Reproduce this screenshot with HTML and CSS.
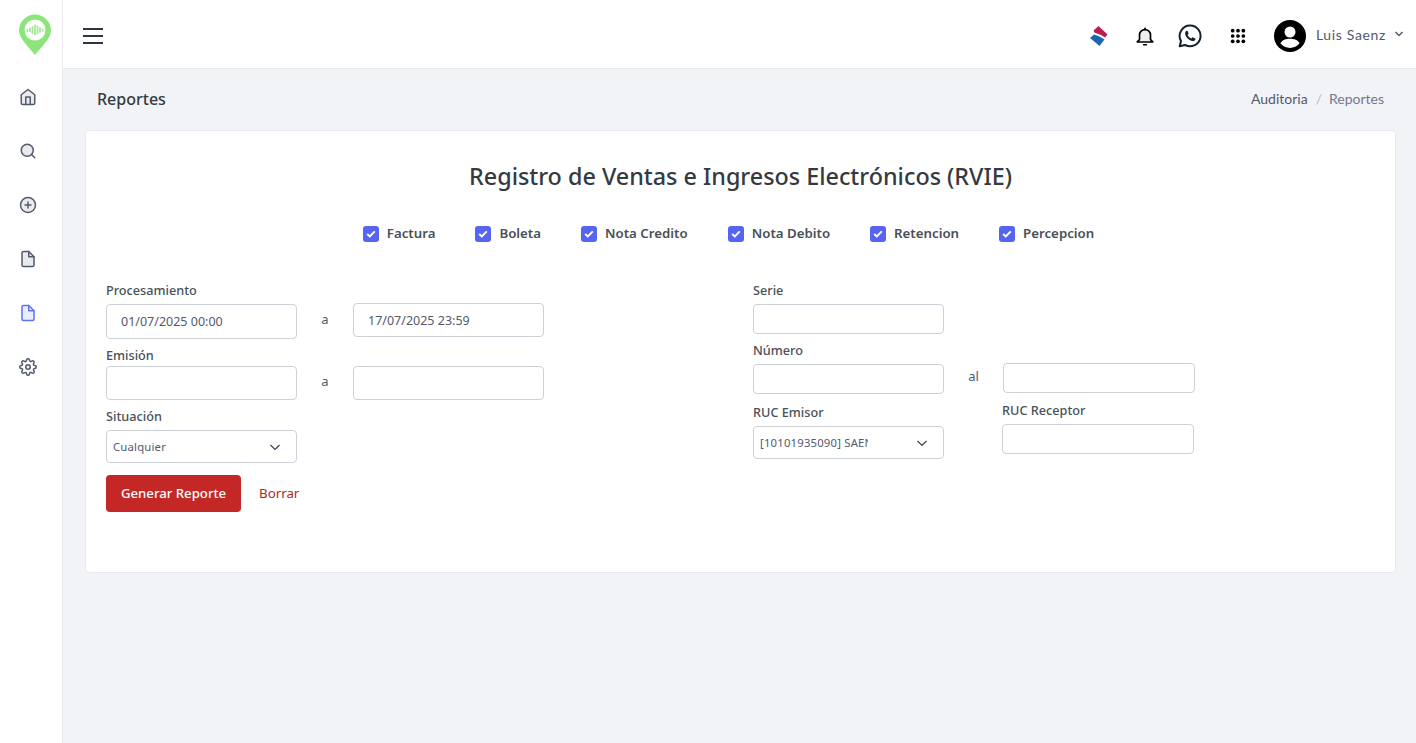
FILE: index.html
```html
<!DOCTYPE html>
<html lang="es">
<head>
<meta charset="utf-8">
<title>Reportes</title>
<link rel="stylesheet" href="styles.css">
</head>
<body>
<div class="app">
  <aside class="sidebar">
    <div class="logo">
      <svg width="34" height="42" viewBox="0 0 34 42"><path d="M17 41C12 34 1 25 1 16.500A16 16 0 0 1 33 16.500C33 25 22 34 17 41Z" fill="#8ce57a"/><circle cx="17" cy="16" r="10.500" fill="#fff"/><g stroke="#a5ea96" stroke-width="1.800" stroke-linecap="round"><path d="M9.500 15.500v1.500M12 14.500v3M14.500 13v6M17 11.500v9M19.500 12.500v7M22 14v4M24.500 15.500v1.500"/></g></svg>
    </div>
    <nav class="nav">
      <a class="nav-item"><svg class="ico" viewBox="0 0 24 24"><path d="M3 9l9-7 9 7v11a2 2 0 0 1-2 2H5a2 2 0 0 1-2-2z"/><polyline class="nf" points="9 22 9 12 15 12 15 22"/></svg></a>
      <a class="nav-item"><svg class="ico" viewBox="0 0 24 24"><circle cx="11" cy="11" r="8"/><line x1="21" y1="21" x2="16.650" y2="16.650"/></svg></a>
      <a class="nav-item"><svg class="ico" viewBox="0 0 24 24"><circle cx="12" cy="12" r="10"/><line x1="12" y1="8" x2="12" y2="16"/><line x1="8" y1="12" x2="16" y2="12"/></svg></a>
      <a class="nav-item"><svg class="ico" viewBox="0 0 24 24"><path d="M13 2H6a2 2 0 0 0-2 2v16a2 2 0 0 0 2 2h12a2 2 0 0 0 2-2V9z"/><polyline class="nf" points="13 2 13 9 20 9"/></svg></a>
      <a class="nav-item active"><svg class="ico" viewBox="0 0 24 24"><path d="M13 2H6a2 2 0 0 0-2 2v16a2 2 0 0 0 2 2h12a2 2 0 0 0 2-2V9z"/><polyline class="nf" points="13 2 13 9 20 9"/></svg></a>
      <a class="nav-item"><svg class="ico" viewBox="0 0 24 24"><circle cx="12" cy="12" r="3"/><path class="nf" d="M19.400 15a1.650 1.650 0 0 0 .33 1.820l.06.06a2 2 0 0 1 0 2.830 2 2 0 0 1-2.830 0l-.06-.06a1.650 1.650 0 0 0-1.820-.33 1.650 1.650 0 0 0-1 1.510V21a2 2 0 0 1-2 2 2 2 0 0 1-2-2v-.09A1.650 1.650 0 0 0 9 19.400a1.650 1.650 0 0 0-1.820.33l-.06.06a2 2 0 0 1-2.830 0 2 2 0 0 1 0-2.830l.06-.06a1.650 1.650 0 0 0 .33-1.820 1.650 1.650 0 0 0-1.510-1H3a2 2 0 0 1-2-2 2 2 0 0 1 2-2h.09A1.650 1.650 0 0 0 4.600 9a1.650 1.650 0 0 0-.33-1.820l-.06-.06a2 2 0 0 1 0-2.830 2 2 0 0 1 2.830 0l.06.06a1.650 1.650 0 0 0 1.820.33H9a1.650 1.650 0 0 0 1-1.510V3a2 2 0 0 1 2-2 2 2 0 0 1 2 2v.09a1.650 1.650 0 0 0 1 1.510 1.650 1.650 0 0 0 1.820-.33l.06-.06a2 2 0 0 1 2.830 0 2 2 0 0 1 0 2.830l-.06.06a1.650 1.650 0 0 0-.33 1.820V9a1.650 1.650 0 0 0 1.510 1H21a2 2 0 0 1 2 2 2 2 0 0 1-2 2h-.09a1.650 1.650 0 0 0-1.510 1z"/></svg></a>
    </nav>
  </aside>
  <div class="main">
    <header class="topbar">
      <button class="burger" aria-label="menu"><span></span><span></span><span></span></button>
      <div class="top-actions">
        <svg class="brand" width="20" height="22" viewBox="0 0 20 22"><path d="M9.500 1L18.500 9.500L16 12.500L12 10L5.500 7.500L4.500 5.500Z" fill="#b3214c"/><path d="M1 13L5 9.500L10.500 11.500L15.500 14.500L10.500 21Z" fill="#1e66b4"/></svg>
        <svg class="bell" width="22" height="22" viewBox="0 0 24 24"><path d="M18 16V11A6 6 0 0 0 6 11V16L3.500 18.500H20.500Z"/><path d="M10.500 21.500h3"/><path class="nf" d="M12 5V3.500"/></svg>
        <svg class="wa" width="24" height="24" viewBox="0 0 24 24"><path class="wa-o" d="M12 1.500A10.400 10.400 0 0 0 3 17L1.700 22.300L7.100 21A10.400 10.400 0 1 0 12 1.500Z"/><path class="wa-p" d="M8.700 6.700C7.500 7.300 6.800 8.700 7.200 10.300C8 13.300 10.700 16.200 14 17C15.500 17.300 17 16.600 17.500 15.200C17.600 14.900 17.500 14.600 17.200 14.500L15 13.400C14.700 13.300 14.400 13.400 14.200 13.600L13.400 14.600C12 14 10.200 12.300 9.600 10.900L10.400 10C10.600 9.800 10.700 9.500 10.500 9.200L9.600 7C9.500 6.700 9 6.600 8.700 6.700Z"/></svg>
        <svg class="apps" width="16" height="16" viewBox="0 0 18 18"><circle cx="3" cy="3" r="2.100"/><circle cx="9" cy="3" r="2.100"/><circle cx="15" cy="3" r="2.100"/><circle cx="3" cy="9" r="2.100"/><circle cx="9" cy="9" r="2.100"/><circle cx="15" cy="9" r="2.100"/><circle cx="3" cy="15" r="2.100"/><circle cx="9" cy="15" r="2.100"/><circle cx="15" cy="15" r="2.100"/></svg>
        <div class="user">
          <svg width="32" height="32" viewBox="0 0 32 32"><circle cx="16" cy="16" r="16"/><circle cx="16" cy="12" r="5.500" fill="#fff"/><path d="M6.500 23.500C8 19.800 12 18.800 16 18.800S24 19.800 25.500 23.500A12.500 12.500 0 0 1 6.500 23.500Z" fill="#fff"/></svg>
          <span class="user-name">Luis Saenz</span>
          <svg class="caret" width="10" height="10" viewBox="0 0 10 10"><path d="M1.500 3L5 6.500L8.500 3"/></svg>
        </div>
      </div>
    </header>
    <section class="page-head">
      <h4 class="page-title">Reportes</h4>
      <div class="crumbs"><span class="crumb-link">Auditoria</span><span class="crumb-sep">/</span><span class="crumb-cur">Reportes</span></div>
    </section>
    <section class="card">
      <h2 class="title">Registro de Ventas e Ingresos Electrónicos (RVIE)</h2>
      <div class="checks">
        <label class="check"><span class="box"><svg width="10" height="8" viewBox="0 0 10 8"><path d="M1.200 4L3.800 6.400L8.800 1.400"/></svg></span>Factura</label>
        <label class="check"><span class="box"><svg width="10" height="8" viewBox="0 0 10 8"><path d="M1.200 4L3.800 6.400L8.800 1.400"/></svg></span>Boleta</label>
        <label class="check"><span class="box"><svg width="10" height="8" viewBox="0 0 10 8"><path d="M1.200 4L3.800 6.400L8.800 1.400"/></svg></span>Nota Credito</label>
        <label class="check"><span class="box"><svg width="10" height="8" viewBox="0 0 10 8"><path d="M1.200 4L3.800 6.400L8.800 1.400"/></svg></span>Nota Debito</label>
        <label class="check"><span class="box"><svg width="10" height="8" viewBox="0 0 10 8"><path d="M1.200 4L3.800 6.400L8.800 1.400"/></svg></span>Retencion</label>
        <label class="check"><span class="box"><svg width="10" height="8" viewBox="0 0 10 8"><path d="M1.200 4L3.800 6.400L8.800 1.400"/></svg></span>Percepcion</label>
      </div>
      <div class="form">
        <div class="col-left">
          <div class="lbl">Procesamiento</div>
          <div class="row row-proc">
            <div class="input h35 push1 indent">01/07/2025 00:00</div>
            <div class="sep sep-proc">a</div>
            <div class="input h34 indent">17/07/2025 23:59</div>
          </div>
          <div class="lbl lbl-next">Emisión</div>
          <div class="row row-emi">
            <div class="input h34"></div>
            <div class="sep sep-emi">a</div>
            <div class="input h34"></div>
          </div>
          <div class="lbl lbl-next lbl-sit">Situación</div>
          <div class="select">
            <span class="select-text">Cualquier</span>
            <svg class="chev" width="12" height="12" viewBox="0 0 12 12"><path d="M1.500 4L6 8.500L10.500 4"/></svg>
          </div>
          <div class="actions">
            <button class="btn">Generar Reporte</button>
            <a class="link-clear">Borrar</a>
          </div>
        </div>
        <div class="col-right">
          <div class="lbl">Serie</div>
          <div class="input h30"></div>
          <div class="lbl lbl-next">Número</div>
          <div class="row row-num">
            <div class="input h30 push1"></div>
            <div class="sep sep-al">al</div>
            <div class="input h30 wide"></div>
          </div>
          <div class="row-ruc">
            <div class="field-emisor">
              <div class="lbl lbl-sit">RUC Emisor</div>
              <div class="select select-ruc">
                <span class="select-text clip">[10101935090] SAENZ</span>
                <svg class="chev" width="12" height="12" viewBox="0 0 12 12"><path d="M1.500 4L6 8.500L10.500 4"/></svg>
              </div>
            </div>
            <div class="field-receptor">
              <div class="lbl lbl-sit">RUC Receptor</div>
              <div class="input h30 wide"></div>
            </div>
          </div>
        </div>
      </div>
    </section>
  </div>
</div>
</body>
</html>
```
FILE: styles.css
```css
* { box-sizing: border-box; }
html, body { margin: 0; height: 100%; }
body { font-family: "Noto Sans", "Open Sans", sans-serif; color: #495057; background: #f1f3f7; overflow: hidden; }
.app { display: flex; height: 743px; }

.sidebar { width: 63px; flex: none; background: #fff; border-right: 1px solid #e9e9ef; }
.logo { height: 68px; display: flex; justify-content: center; padding-top: 14px; padding-left: 7px; }
.nav { display: flex; flex-direction: column; padding-top: 2px; }
.nav-item { height: 54px; display: flex; align-items: center; justify-content: center; padding-right: 6px; color: #545a6d; }
.nav-item.active { color: #5b73f5; }
.ico { width: 18px; height: 18px; fill: rgba(84, 90, 109, .12); stroke: currentColor; stroke-width: 2; stroke-linecap: round; stroke-linejoin: round; }
.ico .nf { fill: none; }
.active .ico { fill: rgba(91, 115, 245, .12); }

.main { flex: 1; min-width: 0; }
.topbar { height: 69px; background: #fff; border-bottom: 1px solid #e9e9ef; display: flex; align-items: center; justify-content: space-between; padding: 4px 12px 0 20px; }
.burger { width: 20px; height: 16px; padding: 0; border: 0; background: none; display: flex; flex-direction: column; justify-content: space-between; }
.burger span { display: block; height: 2px; width: 20px; background: #2f3542; }
.top-actions { display: flex; align-items: center; }
.brand { margin-right: 25px; }
.bell { fill: #eeeeee; stroke: #000; stroke-width: 1.800; stroke-linejoin: round; stroke-linecap: round; margin-right: 22px; }
.bell .nf { fill: none; }
.wa { margin-right: 28px; }
.wa-o { fill: none; stroke: #14202c; stroke-width: 2; stroke-linejoin: round; }
.wa-p { fill: #14202c; }
.apps { fill: #000; margin-right: 28px; }
.user { display: flex; align-items: center; }
.user-name { margin-left: 10px; font-family: Lato, sans-serif; font-size: 14px; letter-spacing: .65px; color: #545a6d; padding-bottom: 3px; }
.caret { margin-left: 8px; margin-bottom: 4px; fill: none; stroke: #545a6d; stroke-width: 1.500; }

.page-head { height: 61px; display: flex; align-items: center; justify-content: space-between; padding: 0 32px 2px 34px; }
.page-title { margin: 0; font-size: 16px; font-weight: 500; color: #343a40; }
.crumbs { font-family: Lato, sans-serif; font-size: 14px; letter-spacing: 0; display: flex; }
.crumb-link { color: #545a6d; }
.crumb-sep { color: #b9bcc4; margin: 0 7px 0 8px; }
.crumb-cur { color: #74788d; }

.card { margin: 0 20px 0 22px; height: 443px; background: #fff; border: 1px solid #e9e9ef; border-radius: 4px; padding: 28px 20px 0; }
.title { margin: 0; height: 34px; line-height: 34px; text-align: center; font-size: 23.350px; font-weight: 500; color: #343a40; }
.checks { display: flex; justify-content: center; gap: 40px; margin-top: 31px; padding-right: 24px; }
.check { display: flex; align-items: flex-start; gap: 8px; font-size: 13.280px; line-height: 18px; font-weight: 600; color: #495057; }
.box { width: 16px; height: 16px; margin-top: 2px; border-radius: 3px; background: #5664f1; display: flex; align-items: center; justify-content: center; }
.box svg { fill: none; stroke: #fff; stroke-width: 2; }

.form { display: flex; margin-top: 39px; }
.col-left { width: 647px; flex: none; }
.col-right { flex: 1; min-width: 0; }
.lbl { height: 18px; line-height: 18px; margin-bottom: 5px; font-size: 12.700px; font-weight: 500; color: #495057; }
.lbl-next { margin-top: 7px; }
.row { display: flex; align-items: flex-start; }
.row-proc { margin-top: -1px; }
.lbl + .row-emi { margin-top: -3px; }
.lbl + .row-num { margin-top: -1px; }
.input { width: 191px; flex: none; border: 1px solid #ced0d8; border-radius: 4px; background: #fff; font-size: 12.500px; letter-spacing: 0; color: #545a6d; display: flex; align-items: center; }
.indent { padding-left: 14px; }
.h35 { height: 35px; }
.h34 { height: 34px; }
.h30 { height: 30px; }
.push1 { margin-top: 1px; }
.wide { width: 192px; }
.sep { width: 56px; flex: none; text-align: center; font-size: 13px; color: #545a6d; }
.sep-proc { line-height: 32px; }
.sep-emi { line-height: 30px; }
.sep-al { width: 59px; line-height: 26px; }
.select { width: 191px; height: 33px; border: 1px solid #ced0d8; border-radius: 4px; background: #fff; display: flex; align-items: center; justify-content: space-between; padding: 0 15px 0 6px; }
.select-text { font-size: 11.300px; letter-spacing: .2px; color: #545a6d; white-space: nowrap; }
.clip { display: block; width: 108px; overflow: hidden; }
.chev { fill: none; stroke: #3a4050; stroke-width: 1.200; }
.actions { display: flex; align-items: center; margin-top: 12px; }
.btn { width: 135px; height: 37px; border: 0; border-radius: 4px; background: #c42826; color: #fff; font-family: inherit; font-size: 13.200px; font-weight: 500; padding: 0 0 2px; }
.link-clear { margin-left: 18px; margin-bottom: 2px; font-size: 13.300px; color: #a82a26; }
.row-ruc { display: flex; align-items: flex-start; gap: 58px; }
.field-emisor { width: 191px; flex: none; margin-top: 9px; }
.field-receptor { width: 192px; flex: none; margin-top: 7px; }
```
